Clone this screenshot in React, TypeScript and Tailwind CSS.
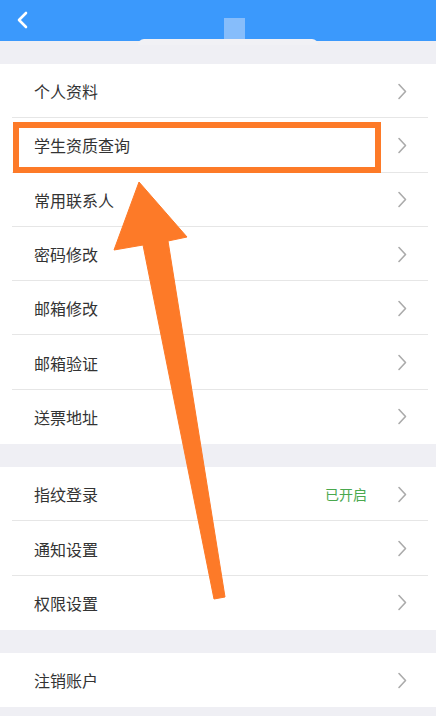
import { Fragment } from 'react'

const sections: { label: string; value?: string }[][] = [
  [
    { label: '个人资料' },
    { label: '学生资质查询' },
    { label: '常用联系人' },
    { label: '密码修改' },
    { label: '邮箱修改' },
    { label: '邮箱验证' },
    { label: '送票地址' },
  ],
  [{ label: '指纹登录', value: '已开启' }, { label: '通知设置' }, { label: '权限设置' }],
  [{ label: '注销账户' }],
]

function Chevron() {
  return (
    <svg width="11" height="17" viewBox="0 0 11 17" className="shrink-0">
      <path d="M2 1.5 L8.5 8.5 L2 15.5" fill="none" stroke="#ababab" strokeWidth="1.6" strokeLinecap="round" strokeLinejoin="round" />
    </svg>
  )
}

function Row({ label, value, last }: { label: string; value?: string; last: boolean }) {
  return (
    <div className="relative h-[54.3px] flex items-center pl-[34px] pr-[28px]">
      <span className="flex-1 text-[16px] text-[#333]">{label}</span>
      {value && <span className="text-[14px] text-[#4aa84e] mr-[30px]">{value}</span>}
      <Chevron />
      {!last && <div className="absolute left-[12px] right-[8px] bottom-0 h-px bg-[#e6e6e6]" />}
    </div>
  )
}

export default function App() {
  return (
    <div
      className="relative w-[436px] h-[716px] overflow-hidden bg-[#efeff4]"
      style={{ fontFamily: '"Noto Sans CJK SC", "Noto Sans", sans-serif' }}
    >
      {/* Header */}
      <div className="relative h-[41px] bg-[#3b99fc]">
        <svg width="14" height="18" viewBox="0 0 14 18" className="absolute left-[15px] top-[11px]">
          <path d="M11 2 L4 9 L11 16" fill="none" stroke="#fff" strokeWidth="2.6" strokeLinecap="round" strokeLinejoin="round" />
        </svg>
        <div className="absolute left-[224px] top-[18px] w-[21px] h-[21px] bg-[#86bdfb]" />
        <div className="absolute left-[138px] top-[39px] w-[180px] h-[6px] rounded-t-[6px] bg-[#f1f1f5]" />
      </div>

      <div className="pt-[23px]">
        {sections.map((rows, si) => (
          <Fragment key={si}>
            <div className="bg-white">
              {rows.map((r, i) => (
                <Row key={r.label} label={r.label} value={r.value} last={i === rows.length - 1} />
              ))}
            </div>
            <div className="h-[23px]" />
          </Fragment>
        ))}
      </div>

      {/* Highlight box */}
      <div className="absolute left-[13px] top-[122px] w-[368px] h-[51px] border-[6px] border-[#fd7a28]" />

      {/* Arrow */}
      <svg width="436" height="716" className="absolute left-0 top-0 pointer-events-none">
        <polygon
          points="139,182 187,237 168,241 225,597 214,599 143,245 114,250"
          fill="#fd7a28"
          stroke="#fd7a28"
          strokeWidth="1"
          strokeLinejoin="round"
        />
      </svg>
    </div>
  )
}
